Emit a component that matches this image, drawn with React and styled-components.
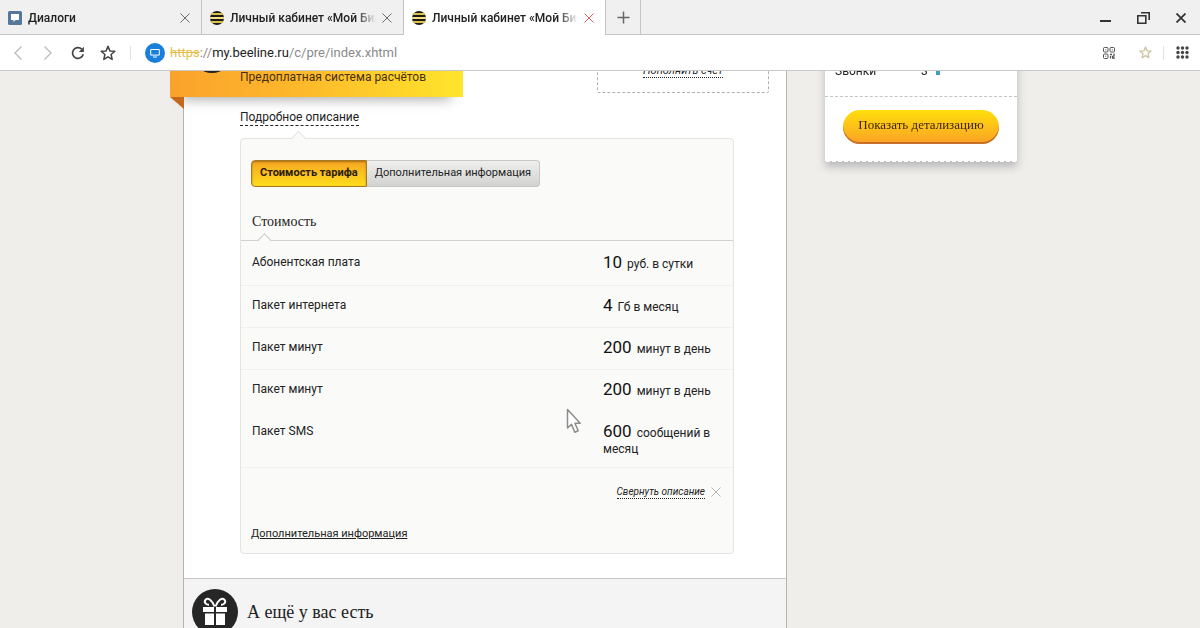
import React, { useState } from "react";
import styled, { createGlobalStyle, css } from "styled-components";

const costRows = [
  { name: "Абонентская плата", amount: "10", unit: "руб. в сутки" },
  { name: "Пакет интернета", amount: "4", unit: "Гб в месяц" },
  { name: "Пакет минут", amount: "200", unit: "минут в день" },
  { name: "Пакет минут", amount: "200", unit: "минут в день", joined: true },
  { name: "Пакет SMS", amount: "600", unit: "сообщений в месяц" },
];

function BeeIcon() {
  return (
    <svg width="14" height="14" viewBox="0 0 14 14">
      <clipPath id="bee">
        <circle cx="7" cy="7" r="7" />
      </clipPath>
      <g clipPath="url(#bee)">
        <rect width="14" height="14" fill="#1f1b14" />
        <rect y="2" width="14" height="2" fill="#d9c24e" />
        <rect y="6" width="14" height="2" fill="#f3e08a" />
        <rect y="10" width="14" height="2" fill="#d9c24e" />
      </g>
    </svg>
  );
}

function DialogIcon() {
  return (
    <svg width="14" height="14" viewBox="0 0 14 14">
      <rect width="14" height="14" rx="1.5" fill="#54779c" />
      <path d="M3 3h8v6H7.5L5.5 11V9H3z" fill="#fff" />
    </svg>
  );
}

function Cross({ size = 10, color = "#666", width = 1 }) {
  return (
    <svg width={size} height={size} viewBox="0 0 10 10">
      <path d="M.5.5l9 9M9.5.5l-9 9" stroke={color} strokeWidth={width} fill="none" />
    </svg>
  );
}

function Star({ size = 16, color = "#444", width = 1.5 }) {
  return (
    <svg width={size} height={size} viewBox="0 0 16 16">
      <path
        d="M8 1.3l1.9 4.6 4.9.4-3.7 3.2 1.1 4.9L8 11.8l-4.2 2.6 1.1-4.9L1.2 6.3l4.9-.4z"
        stroke={color}
        strokeWidth={width}
        strokeLinejoin="round"
        fill="none"
      />
    </svg>
  );
}

function BrowserTab({ icon, title, active }) {
  return (
    <Tab $active={active}>
      {icon}
      <TabTitle>{title}</TabTitle>
      <IconButton aria-label="Закрыть вкладку">
        <Cross color={active ? "#e0605f" : "#6b6b6b"} />
      </IconButton>
    </Tab>
  );
}

function Toolbar() {
  return (
    <ToolbarRow>
      <ToolButton aria-label="Назад">
        <svg width="10" height="16" viewBox="0 0 10 16">
          <path d="M8.5 1.5L2 8l6.5 6.5" stroke="#bcbcbc" strokeWidth="1.4" fill="none" />
        </svg>
      </ToolButton>
      <ToolButton aria-label="Вперёд">
        <svg width="10" height="16" viewBox="0 0 10 16">
          <path d="M1.5 1.5L8 8l-6.5 6.5" stroke="#bcbcbc" strokeWidth="1.4" fill="none" />
        </svg>
      </ToolButton>
      <ToolButton aria-label="Обновить">
        <svg width="14" height="14" viewBox="0 0 14 14">
          <path d="M12.2 8.2A5.4 5.4 0 1 1 10.8 3.2" stroke="#444" strokeWidth="1.7" fill="none" />
          <path d="M12.9 .8v5.1H7.8z" fill="#444" />
        </svg>
      </ToolButton>
      <ToolButton aria-label="В закладки">
        <Star />
      </ToolButton>
      <Separator />
      <Address>
        <svg width="20" height="20" viewBox="0 0 20 20">
          <circle cx="10" cy="10" r="10" fill="#1a7fdb" />
          <path d="M5.7 6.5h8.6v5.6H5.7zM8 14h4" stroke="#fff" strokeWidth="1" fill="none" />
        </svg>
        <Url>
          <s>https</s>://<b>my.beeline.ru</b>/c/pre/index.xhtml
        </Url>
      </Address>
      <ToolbarEnd>
        <ToolButton aria-label="QR-код">
          <svg width="12" height="12" viewBox="0 0 12 12" fill="none" stroke="#555">
            <rect x=".5" y=".5" width="4.5" height="4.5" rx="1" />
            <rect x="7" y=".5" width="4.5" height="4.5" rx="1" />
            <rect x=".5" y="7" width="4.5" height="4.5" rx="1" />
            <path d="M2.2 2.8h1M8.8 2.8h1M2.2 9.2h1" />
            <path d="M7 7.5h2M11 6.5v3M7.5 9v2.5M9 11h2.8M9 9.5h1.5" strokeWidth="1.3" />
          </svg>
        </ToolButton>
        <ToolButton aria-label="Избранное">
          <Star size={13} color="#c9c3a0" width={1.6} />
        </ToolButton>
        <Separator />
        <ToolButton aria-label="Меню">
          <svg width="13" height="13" viewBox="0 0 13 13" fill="#444">
            {[2, 6.5, 11].map((y) => [2, 6.5, 11].map((x) => <circle key={x + "-" + y} cx={x} cy={y} r="1.7" />))}
          </svg>
        </ToolButton>
      </ToolbarEnd>
    </ToolbarRow>
  );
}

function TariffPanel() {
  const [section, setSection] = useState("cost");

  return (
    <Panel>
      <Notch $left={52} />
      <Switcher>
        <SwitchButton $active={section === "cost"} onClick={() => setSection("cost")}>
          Стоимость тарифа
        </SwitchButton>
        <SwitchButton $active={section === "info"} onClick={() => setSection("info")}>
          Дополнительная информация
        </SwitchButton>
      </Switcher>
      <SectionTitle>Стоимость</SectionTitle>
      <Divider>
        <Notch $left={19} $dark />
      </Divider>
      <CostTable>
        <tbody>
          {costRows.map((row, i) => (
            <CostRow key={i} $joined={row.joined}>
              <th scope="row">{row.name}</th>
              <td>
                <Amount>{row.amount}</Amount> {row.unit}
              </td>
            </CostRow>
          ))}
        </tbody>
      </CostTable>
      <Collapse>
        <CollapseLink href="#collapse">Свернуть описание</CollapseLink>
        <Cross color="#b5b5b5" />
      </Collapse>
      <MoreLink href="#more">Дополнительная информация</MoreLink>
    </Panel>
  );
}

function App() {
  return (
    <Browser>
      <GlobalStyle />
      <TabStrip>
        <BrowserTab icon={<DialogIcon />} title="Диалоги" />
        <BrowserTab icon={<BeeIcon />} title="Личный кабинет «Мой Билайн»" />
        <BrowserTab icon={<BeeIcon />} title="Личный кабинет «Мой Билайн»" active />
        <NewTab aria-label="Новая вкладка">
          <svg width="13" height="13" viewBox="0 0 13 13">
            <path d="M6.5.5v12M.5 6.5h12" stroke="#666" strokeWidth="1.5" />
          </svg>
        </NewTab>
        <WindowButtons>
          <IconButton aria-label="Свернуть">
            <svg width="11" height="12" viewBox="0 0 11 12">
              <path d="M0 9h11" stroke="#333" strokeWidth="2" />
            </svg>
          </IconButton>
          <IconButton aria-label="Развернуть">
            <svg width="13" height="12" viewBox="0 0 13 12" fill="none" stroke="#333" strokeWidth="1.6">
              <path d="M.8 3.8h8v7.4h-8z" />
              <path d="M4 .8h8.2V8" />
            </svg>
          </IconButton>
          <IconButton aria-label="Закрыть">
            <Cross color="#333" width={1.8} />
          </IconButton>
        </WindowButtons>
      </TabStrip>
      <Toolbar />
      <Viewport>
        <Page>
          <Main>
            <Header>
              <Ribbon>
                <RibbonLogo />
                Предоплатная система расчётов
              </Ribbon>
              <PayBox>
                <PayLink href="#pay">Пополнить счёт</PayLink>
              </PayBox>
            </Header>
            <Details>
              <DetailsLink href="#details">Подробное описание</DetailsLink>
              <TariffPanel />
            </Details>
            <Extras>
              <svg width="46" height="46" viewBox="0 0 46 46">
                <circle cx="23" cy="23" r="23" fill="#262626" />
                <g fill="#fff">
                  <path d="M11 18h11v5H11zM24 18h11v5H24zM13 24.5h9V36h-9zM24 24.5h9V36h-9z" />
                </g>
                <path
                  d="M22.5 17.500C20 11 16 8.500 13.800 10.500c-2.300 2.200-.3 5.500 3.200 5.200M23.500 17.500C26 11 30 8.500 32.200 10.500c2.300 2.200.3 5.500-3.200 5.200"
                  fill="none"
                  stroke="#fff"
                  strokeWidth="2"
                />
              </svg>
              <h2>А ещё у вас есть</h2>
            </Extras>
          </Main>
          <Sidebar>
            <Receipt>
              <CallsRow>
                <span>Звонки</span>
                <span>3</span>
                <CallsBar />
              </CallsRow>
              <DetailButton>Показать детализацию</DetailButton>
            </Receipt>
            <TornEdge />
          </Sidebar>
        </Page>
        <Pointer width="16" height="26" viewBox="0 0 16 26">
          <path
            d="M1.5 1.5v18.500l4-3.600 3.300 7.800 3.400-1.500-3.300-7.500h5.300z"
            fill="#fff"
            stroke="#8d8d8d"
            strokeWidth="1.5"
            strokeLinejoin="round"
          />
        </Pointer>
      </Viewport>
    </Browser>
  );
}

export default App;

const GlobalStyle = createGlobalStyle`
  * {
    box-sizing: border-box;
  }
  body {
    margin: 0;
    color: #222;
    font-family: Roboto, "Liberation Sans", sans-serif;
    font-size: 12px;
    line-height: 16px;
  }
  button {
    font: inherit;
    color: inherit;
    cursor: pointer;
  }
  a {
    color: inherit;
    text-decoration: none;
  }
  svg {
    display: block;
    flex-shrink: 0;
  }
`;

const serif = css`
  font-family: "Liberation Serif", serif;
`;

const Browser = styled.div`
  display: flex;
  flex-direction: column;
  height: 100vh;
  overflow: hidden;
`;

const TabStrip = styled.div`
  display: flex;
  flex-shrink: 0;
  height: 35px;
  background: #f0f0f0;
  box-shadow: inset 0 -1px #c4c4c4;
`;

const Tab = styled.div`
  display: flex;
  align-items: center;
  gap: 6px;
  width: 202px;
  padding: 0 11px 0 8px;
  border-right: 1px solid #c4c4c4;
  background: ${(props) => (props.$active ? "#fff" : "none")};
`;

const TabTitle = styled.span`
  flex: 1;
  overflow: hidden;
  white-space: nowrap;
  font-weight: 500;
  mask-image: linear-gradient(to right, #000 calc(100% - 20px), transparent);
`;

const IconButton = styled.button`
  display: flex;
  align-items: center;
  justify-content: center;
  padding: 0;
  border: 0;
  background: none;
`;

const ToolButton = styled(IconButton)`
  width: 16px;
`;

const NewTab = styled(IconButton)`
  width: 35px;
  border-right: 1px solid #c4c4c4;
`;

const WindowButtons = styled.div`
  display: flex;
  align-items: center;
  gap: 26px;
  margin-left: auto;
  padding-right: 14px;
`;

const ToolbarRow = styled.div`
  display: flex;
  flex-shrink: 0;
  align-items: center;
  gap: 14px;
  height: 36px;
  padding: 0 10px;
  border-bottom: 1px solid #c9c9c9;
  background: #fff;
`;

const Separator = styled.div`
  width: 1px;
  height: 14px;
  background: #e2e2e2;
`;

const Address = styled.div`
  display: flex;
  flex: 1;
  align-items: center;
  gap: 5px;
`;

const Url = styled.div`
  font-size: 13px;
  color: #8a8a8a;
  s {
    color: #e3c04a;
  }
  b {
    color: #222;
    font-weight: 400;
  }
`;

const ToolbarEnd = styled.div`
  display: flex;
  align-items: center;
  gap: 10px;
  button:first-child {
    margin-right: 10px;
  }
`;

const Viewport = styled.div`
  position: relative;
  flex: 1;
  overflow: hidden;
  background: #f0eeea;
`;

/* the page is scrolled a little, so its top edge is cut */
const Page = styled.div`
  display: flex;
  align-items: flex-start;
  gap: 38px;
  max-width: 834px;
  margin: -40px auto 0;
`;

const Main = styled.main`
  flex: 1;
  border: solid #b4b4b0;
  border-width: 0 1px;
  background: #fff;
`;

const Header = styled.div`
  display: flex;
  justify-content: space-between;
  align-items: flex-start;
  padding-right: 17px;
`;

const Ribbon = styled.div`
  position: relative;
  display: flex;
  align-items: flex-end;
  gap: 8px;
  width: 293px;
  height: 66px;
  margin-left: -14px;
  padding: 0 0 12px 22px;
  background: linear-gradient(to right, #faa22b, #fdb92b 45%, #ffe52b);
  box-shadow: 0 14px 12px -12px rgba(0, 0, 0, 0.35);
  color: #4a2f12;
  &::after {
    content: "";
    position: absolute;
    top: 100%;
    left: 0;
    border-top: 12px solid #c4691c;
    border-left: 14px solid transparent;
  }
`;

const RibbonLogo = styled.div`
  width: 40px;
  height: 40px;
  margin-bottom: 12px;
  border-radius: 50%;
  background: #222;
`;

const PayBox = styled.div`
  display: flex;
  justify-content: center;
  align-items: flex-end;
  width: 172px;
  height: 62px;
  padding-bottom: 14px;
  border: 1px dashed #b0b0b0;
  border-radius: 2px;
`;

const PayLink = styled.a`
  border-bottom: 1px dotted #222;
  font-size: 11px;
  font-style: italic;
  line-height: 13px;
`;

const Details = styled.div`
  padding: 12px 52px 24px 56px;
`;

const DetailsLink = styled.a`
  display: inline-block;
  border-bottom: 1px dashed #222;
`;

const Panel = styled.section`
  position: relative;
  margin-top: 12px;
  padding-top: 21px;
  padding-bottom: 11px;
  border: 1px solid #e4e4e1;
  border-radius: 4px;
  background: #fafaf8;
`;

const Notch = styled.span`
  position: absolute;
  top: ${(props) => (props.$dark ? -5 : -6)}px;
  left: ${(props) => props.$left}px;
  width: ${(props) => (props.$dark ? 9 : 11)}px;
  height: ${(props) => (props.$dark ? 9 : 11)}px;
  border: solid ${(props) => (props.$dark ? "#c8c8c5" : "#e4e4e1")};
  border-width: 1px 0 0 1px;
  background: linear-gradient(135deg, #fafaf8 60%, transparent 60%);
  transform: rotate(45deg);
`;

const Switcher = styled.div`
  display: flex;
  padding: 0 10px;
`;

const SwitchButton = styled.button`
  height: 27px;
  padding: 0 8px 1px;
  border: 1px solid #c6c6c4;
  border-left: 0;
  background: linear-gradient(#efefee, #d2d2d0);
  font-size: 11px;
  &:first-child {
    border-left: 1px solid #c6c6c4;
    border-radius: 4px 0 0 4px;
  }
  &:last-child {
    border-radius: 0 4px 4px 0;
  }
  ${(props) =>
    props.$active &&
    css`
      && {
        border-color: #a87a22;
        background: linear-gradient(#f6a623, #ffdd1c);
        box-shadow: inset 0 1px 2px rgba(90, 50, 0, 0.5);
        color: #2d1c06;
        font-weight: 700;
      }
    `}
`;

const SectionTitle = styled.h3`
  ${serif}
  margin: 0;
  padding: 25px 11px 8px;
  font-size: 14px;
  font-weight: 400;
  line-height: 20px;
`;

const Divider = styled.div`
  position: relative;
  height: 1px;
  background: #d2d2cf;
`;

const CostTable = styled.table`
  width: 100%;
  margin-top: 2px;
  border-collapse: collapse;
  table-layout: fixed;
`;

const CostRow = styled.tr`
  border-bottom: 1px solid ${(props) => (props.$joined ? "transparent" : "#f0f0ed")};
  th,
  td {
    height: 42px;
    padding: 9px 12px 10px 11px;
    text-align: left;
    vertical-align: top;
    font-weight: 400;
  }
  th {
    padding-top: 11px;
  }
  td {
    width: 141px;
  }
`;

const Amount = styled.span`
  margin-right: 2px;
  font-size: 17px;
  line-height: 20px;
  color: #111;
`;

const Collapse = styled.div`
  display: flex;
  justify-content: flex-end;
  align-items: center;
  gap: 6px;
  padding: 17px 12px 16px;
`;

const CollapseLink = styled.a`
  border-bottom: 1px dotted #222;
  font-size: 10px;
  font-style: italic;
  line-height: 13px;
`;

const MoreLink = styled.a`
  display: inline-block;
  margin: 11px 10px 0;
  font-size: 11px;
  text-decoration: underline;
`;

const Extras = styled.div`
  display: flex;
  align-items: center;
  gap: 9px;
  padding: 10px 8px;
  border-top: 1px solid #c6c6c4;
  background: #f4f4f4;
  h2 {
    ${serif}
    margin: 0;
    font-size: 18px;
    font-weight: 400;
  }
`;

const Sidebar = styled.aside`
  width: 192px;
  filter: drop-shadow(0 5px 4px rgba(80, 80, 100, 0.35));
`;

const Receipt = styled.div`
  display: flex;
  flex-direction: column;
  padding-bottom: 15px;
  background: #fff;
`;

const TornEdge = styled.div`
  height: 4px;
  background: radial-gradient(circle at 3px 0, #fff 3px, transparent 3px) 0 0 / 6px 4px repeat-x;
`;

const CallsRow = styled.div`
  display: flex;
  align-items: flex-end;
  height: 66px;
  padding: 0 10px 17px;
  border-bottom: 1px dashed #c2c4cc;
  span:first-child {
    width: 86px;
  }
`;

const CallsBar = styled.div`
  width: 4px;
  height: 12px;
  margin: 0 0 4px 8px;
  background: #3d9cc0;
`;

const DetailButton = styled.button`
  ${serif}
  height: 34px;
  margin: 13px 18px 0;
  padding: 0 0 4px;
  border: 0;
  border-radius: 17px;
  background: linear-gradient(#ffdf0c, #fba127);
  box-shadow: inset 0 -2px #c8702a;
  color: #3b2408;
  font-size: 13px;
  white-space: nowrap;
`;

const Pointer = styled.svg`
  position: absolute;
  top: 337px;
  left: 566px;
`;
